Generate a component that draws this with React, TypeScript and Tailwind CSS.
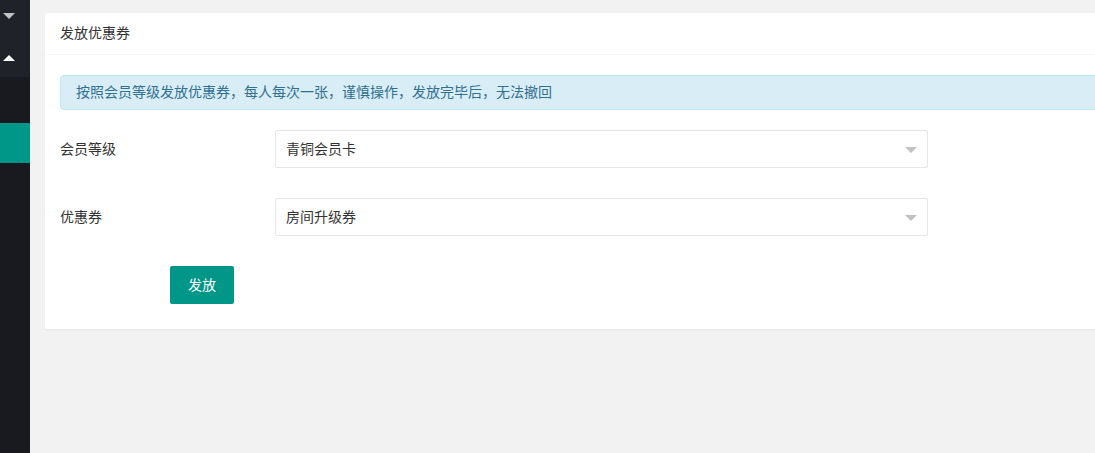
import React from "react";

const font = { fontFamily: '"Helvetica Neue", Helvetica, "Noto Sans CJK SC", "Liberation Sans", sans-serif' };

function Select({ value }: { value: string }) {
  return (
    <div className="relative flex h-[38px] w-[653px] items-center rounded-[2px] border border-[#e6e6e6] bg-white pl-[10px] text-[14px] text-[#333]">
      {value}
      <span className="absolute right-[10px] top-[16px] h-0 w-0 border-x-[6px] border-t-[6px] border-x-transparent border-t-[#c2c2c2]" />
    </div>
  );
}

export default function App() {
  return (
    <div className="flex h-[453px] w-[1095px] overflow-hidden bg-[#f2f2f2]" style={font}>
      <div className="flex w-[30px] shrink-0 flex-col bg-[#191a1f]">
        <div className="flex h-[77px] flex-col items-start bg-[#20222a] pl-[3px] pt-[13px]">
          <span className="h-0 w-0 border-x-[6px] border-t-[6px] border-x-transparent border-t-[#c2c2c2]" />
          <span className="mt-[36px] h-0 w-0 border-x-[6px] border-b-[6px] border-x-transparent border-b-white" />
        </div>
        <div className="mt-[46px] h-[40px] bg-[#009688]" />
      </div>
      <div className="flex-1 pl-[15px] pt-[13px]">
        <div className="w-[1070px] rounded-[2px] bg-white shadow-[0_1px_2px_0_rgba(0,0,0,0.05)]">
          <div className="flex h-[42px] items-center border-b border-[#f6f6f6] px-[15px] text-[14px] text-[#333]">
            发放优惠券
          </div>
          <div className="px-[15px] pb-[25px] pt-[20px]">
            <div className="flex h-[35px] items-center rounded-[4px] border border-[#bce8f1] bg-[#d9edf7] pl-[15px] text-[14px] text-[#31708f]">
              按照会员等级发放优惠券，每人每次一张，谨慎操作，发放完毕后，无法撤回
            </div>
            <div className="mt-[20px] flex items-center">
              <div className="w-[215px] text-[14px] text-[#333]">会员等级</div>
              <Select value="青铜会员卡" />
            </div>
            <div className="mt-[30px] flex items-center">
              <div className="w-[215px] text-[14px] text-[#333]">优惠券</div>
              <Select value="房间升级券" />
            </div>
            <div className="mt-[30px] pl-[110px]">
              <button className="h-[38px] w-[64px] rounded-[2px] bg-[#009688] text-[14px] text-white">发放</button>
            </div>
          </div>
        </div>
      </div>
    </div>
  );
}
